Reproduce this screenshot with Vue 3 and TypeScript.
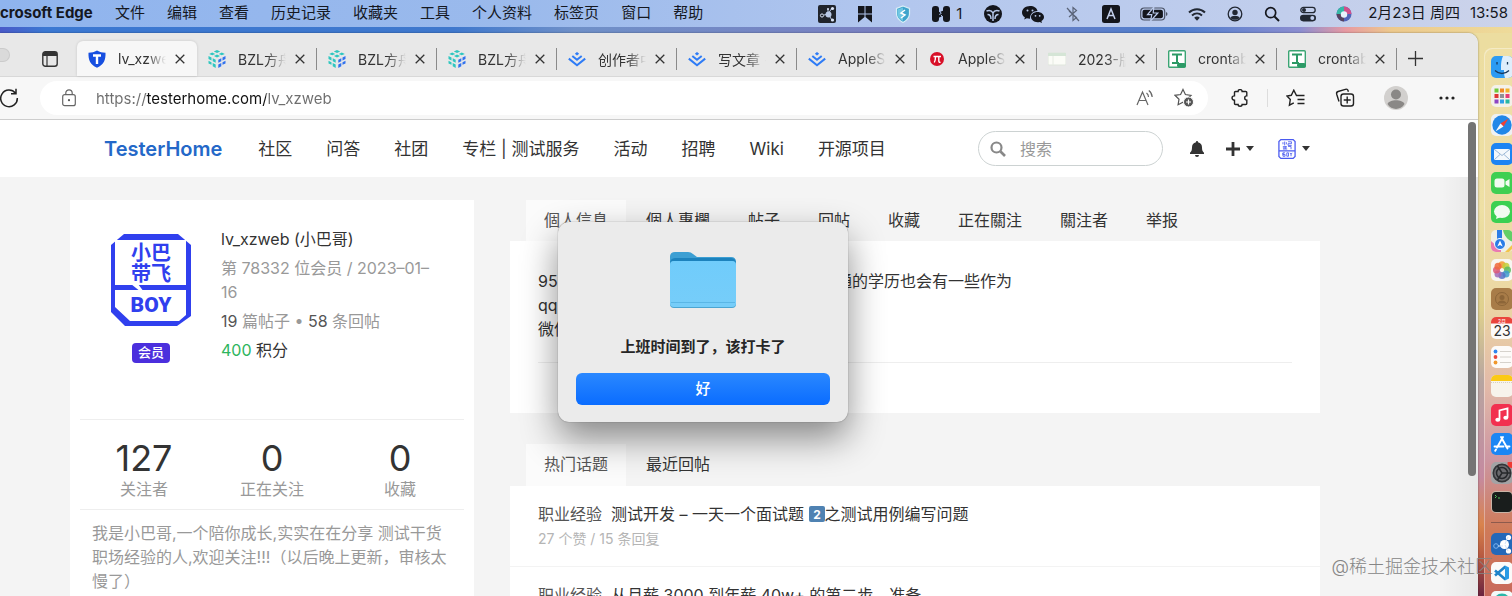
<script setup lang="ts">
import { ref } from 'vue'

interface Glyph { name: string; w: number; h: number; body: string }
interface BrowserTab { title: string; icon: string }
interface DockApp { name: string; body: string }

const menus: string[] = ['文件', '编辑', '查看', '历史记录', '收藏夹', '工具', '个人资料', '标签页', '窗口', '帮助']

const statusLeft: Glyph[] = [
  { name: 'nodes', w: 18, h: 18, body: '<rect width="18" height="18" rx="2" fill="#20242c"/><g stroke="#b9c9e6" stroke-width="1"><path d="M10 9 14 3M10 9l4 6M10 9l-4 1M10 9V4" fill="none"/></g><circle cx="10.5" cy="9.5" r="3" fill="#b9c9e6"/><circle cx="14.5" cy="3.5" r="1.6" fill="#dce6f8"/><circle cx="14.5" cy="15" r="1.6" fill="#dce6f8"/><circle cx="4" cy="10.5" r="1.6" fill="none" stroke="#dce6f8"/><circle cx="10" cy="4" r="1" fill="#dce6f8"/>' },
  { name: 'bookmarks', w: 18, h: 18, body: '<path d="M2 1H8.500V8.500H2ZM9.500 1H16V8.500H9.500ZM2 9.500H8.500V12L2 17.500ZM9.500 9.500H16V17.500L9.500 12Z" fill="#14161c"/>' },
  { name: 'shield', w: 18, h: 18, body: '<path d="M9 1 15.500 3.500V9c0 4-3 6.500-6.500 8.500C5.500 15.500 2.500 13 2.500 9V3.500Z" fill="#3fa4cc" stroke="#d9eef6" stroke-width="1.200"/><path d="M9 2.500V16C5.500 14 3.500 12 3.500 9V4.500Z" fill="#6fc6e2"/><path d="M11 5 7 8l4 2-4 3" fill="none" stroke="#fff" stroke-width="1.500"/>' },
  { name: 'hs', w: 18, h: 18, body: '<rect y="1" width="7" height="16" rx="3" fill="#14161c"/><rect x="11" y="1" width="7" height="16" rx="3" fill="#14161c"/><path d="m5 8 8-3v5l-8 3.500Z" fill="#14161c"/><path d="m7.500 5.500 1.700 3-2 1M10.500 12.500 9.300 10" stroke="#a9bfe8" fill="none"/>' }
]
const statusRight: Glyph[] = [
  { name: 'tri', w: 18, h: 18, body: '<circle cx="9" cy="9" r="9" fill="#14161c"/><path d="M2.500 6c3-1 5.500 0 6.500 2 1-2 3.500-3 6.500-2M9 8v8M3.500 9.500c2.500 0 3.500 1.500 3.500 4.500M14.500 9.500c-2.500 0-3.500 1.500-3.500 4.500" fill="none" stroke="#b6c8ea" stroke-width="1.500"/>' },
  { name: 'wechat', w: 22, h: 18, body: '<path d="M8 1C3.600 1 0 3.800 0 7.400c0 2 1.100 3.700 2.900 4.900L2.200 14.500l2.600-1.300c1 .3 2 .5 3.200.5C8 9 11 6 15.500 6 15 3 12 1 8 1Z" fill="#14161c"/><path d="M15.500 7C11.900 7 9 9.300 9 12.100s2.900 5.100 6.500 5.100c.8 0 1.600-.1 2.300-.3l2.200 1-.6-1.900c1.600-.9 2.600-2.300 2.600-3.900C22 9.300 19.100 7 15.500 7Z" fill="#14161c"/><g fill="#b9c9ea"><circle cx="5.500" cy="5.500" r="1"/><circle cx="10.500" cy="5.500" r="1"/><circle cx="13.500" cy="10.800" r=".9"/><circle cx="17.700" cy="10.800" r=".9"/></g>' },
  { name: 'bluetooth', w: 18, h: 18, body: '<path d="m5 6 7.500 6.500L9 15.500v-13l3.500 3L5 12M3 3l12 13" fill="none" stroke="#5a6377" stroke-width="1.200"/>' },
  { name: 'input', w: 18, h: 18, body: '<rect width="18" height="18" rx="2.500" fill="#14161c"/><path d="M5 14 9 4l4 10M6.400 10.500h5.200" stroke="#c5d2ee" stroke-width="1.500" fill="none"/>' },
  { name: 'battery', w: 28, h: 14, body: '<rect x=".7" y="1" width="24" height="12" rx="3.500" fill="none" stroke="#4a5265" stroke-width="1.200"/><rect x="2.500" y="2.800" width="20.400" height="8.400" rx="2" fill="#14161c"/><path d="M26 5v4c2-.7 2-3.300 0-4" fill="#4a5265"/><path d="M13.800 0 7.500 7.600h4.300L10.600 14l7.200-8h-4.600Z" fill="#14161c" stroke="#bccbec" stroke-width="1.200"/>' },
  { name: 'wifi', w: 18, h: 14, body: '<path d="M1 5.500c4.500-4.400 11.500-4.400 16 0" fill="none" stroke="#222833" stroke-width="2"/><path d="M4 8.500c3-2.700 7-2.700 10 0" fill="none" stroke="#222833" stroke-width="2"/><path d="m6.200 10.700 2.800 3 2.800-3c-1.600-1.500-4-1.500-5.600 0Z" fill="#222833"/>' },
  { name: 'account', w: 18, h: 16, body: '<circle cx="9" cy="8" r="6.800" fill="none" stroke="#222833" stroke-width="1.300"/><circle cx="9" cy="6.400" r="2.700" fill="#222833"/><path d="M4.300 12c1-3 8.400-3 9.400 0-2.500 2.400-6.900 2.400-9.400 0Z" fill="#222833"/>' },
  { name: 'search', w: 16, h: 16, body: '<circle cx="6.700" cy="6.700" r="5" fill="none" stroke="#14161c" stroke-width="1.700"/><path d="m10.500 10.500 4.500 4.500" stroke="#14161c" stroke-width="2"/>' },
  { name: 'controls', w: 16, h: 16, body: '<rect x=".8" y="1.300" width="14.400" height="5.400" rx="2.700" fill="none" stroke="#222833" stroke-width="1.300"/><circle cx="4" cy="4" r="2" fill="#222833"/><rect y="8.700" width="16" height="6.700" rx="3.300" fill="#222833"/><circle cx="12.300" cy="12" r="2" fill="#c0cdec"/>' },
  { name: 'siri', w: 16, h: 16, body: '<circle cx="8" cy="8" r="7.500" fill="#5164b8"/><path d="M8 .5A7.500 7.500 0 0 0 .5 8L8 8Z" fill="#36b8a6"/><path d="M8 .5A7.500 7.500 0 0 1 15.500 8L8 8Z" fill="#d1508c"/><path d="M.5 8c.5 4.500 4 7.500 7.500 7.500L8 8Z" fill="#57425f"/><circle cx="8" cy="8.500" r="3.200" fill="#e9f1fb"/>' }
]

const cube = '<g fill="#2fc7c0"><path d="m9 0 3.200 1.500L9 3 5.800 1.500Z"/><path d="m4.200 2.500 3 1.400L4.200 5.300l-3-1.400ZM13.800 2.500l3 1.400-3 1.400-3-1.400ZM9 4.500l3 1.500-3 1.500L6 6Z"/><path d="m.5 6 3 1.500v3L.5 9ZM.5 10.700l3 1.500v2.600l-3-1.400ZM4.700 8.200l3 1.500v3l-3-1.500ZM4.700 13l3 1.500V18l-3-1.700Z"/></g><g fill="#3272ee"><path d="m17.500 6-3 1.500v3l3-1.500ZM17.500 10.700l-3 1.500v2.600l3-1.400ZM13.300 8.200l-3 1.500v3l3-1.500ZM13.300 13l-3 1.500V18l3-1.700Z"/></g>'
const juejin = '<path d="m9 2 2.200 1.800L9 5.500 6.800 3.800Z" fill="#2f7cf6"/><path d="m4.300 6 4.700 3.700L13.700 6M.8 8.600 9 15.200l8.200-6.600" fill="none" stroke="#2f7cf6" stroke-width="2"/>'
const sheet = '<rect x=".7" y=".7" width="16.600" height="16.600" rx="1" fill="#fff" stroke="#3aa573" stroke-width="1.400"/><path d="M4 4.500h10M9 4.500v8M4 13h7" stroke="#2c9a66" stroke-width="2" fill="none"/><rect x="9" y="13" width="9" height="4.500" rx="2" fill="#2c9a66"/>'
const tabs: BrowserTab[] = [
  { title: 'lv_xzweb', icon: '<path d="M9 .5c3 1.800 5 2 8.500 2.300.3 7-1.500 11.700-8.500 15C2 14.500.2 9.800.5 2.800 4 2.500 6 2.300 9 .5Z" fill="#174fe0"/><path d="M5 5.500h8M9 5.500V14" stroke="#fff" stroke-width="2.400"/>' },
  { title: 'BZL方舟', icon: cube },
  { title: 'BZL方舟', icon: cube },
  { title: 'BZL方舟', icon: cube },
  { title: '创作者中心', icon: juejin },
  { title: '写文章 - 掘金', icon: juejin },
  { title: 'AppleScript', icon: juejin },
  { title: 'AppleScript', icon: '<circle cx="9" cy="9" r="7" fill="#d81028"/><path d="M5.500 6.500h7.500M7.500 6.500c0 3 0 4-1.200 6M10.800 6.500v4.300c0 1.400.7 1.700 1.700 1.300" stroke="#fff" stroke-width="1.400" fill="none"/>' },
  { title: '2023-版本', icon: '<rect x="0" y="3" width="18" height="12" rx="1" fill="#fbfcf7" stroke="#dfe6dc"/><path d="M0 3h18v3H0Z" fill="#d5e5d6"/><path d="M5 6v9" stroke="#e6ebe2"/>' },
  { title: 'crontab', icon: sheet },
  { title: 'crontab', icon: sheet }
]

const siteNav: string[] = ['社区', '问答', '社团', '专栏 | 测试服务', '活动', '招聘', 'Wiki', '开源项目']
const profileTabs: string[] = ['個人信息', '個人專欄', '帖子', '回帖', '收藏', '正在關注', '關注者', '举报']
const topicTabs: string[] = ['热门话题', '最近回帖']
const stats = [
  { value: 127, label: '关注者' },
  { value: 0, label: '正在关注' },
  { value: 0, label: '收藏' }
]

const dockApps: DockApp[] = [
  { name: '访达', body: '<rect width="22" height="22" rx="5" fill="#2c9bf3"/><path d="M12 0h5a5 5 0 0 1 5 5v12a5 5 0 0 1-5 5h-3c-1-3-1-5-1-8h-3c0-6 0-9 2-14Z" fill="#dfeefb"/><path d="M6 6v2.500M16.500 6v2.500M4 14.500c4 4 10 4 14 0" stroke="#17395e" stroke-width="1.300" fill="none"/>' },
  { name: '启动台', body: '<rect width="22" height="22" rx="5" fill="#f4f1ea"/><g><rect x="3.500" y="3.500" width="4" height="4" fill="#6fc93c"/><rect x="9" y="3.500" width="4" height="4" fill="#f08a24"/><rect x="14.500" y="3.500" width="4" height="4" fill="#f1b32b"/><rect x="3.500" y="9" width="4" height="4" fill="#e03636"/><rect x="9" y="9" width="4" height="4" fill="#8f8f96"/><rect x="14.500" y="9" width="4" height="4" fill="#e63b77"/><rect x="3.500" y="14.500" width="4" height="4" fill="#8e44c4"/><rect x="9" y="14.500" width="4" height="4" fill="#2f9fe8"/><rect x="14.500" y="14.500" width="4" height="4" fill="#27b7a4"/></g>' },
  { name: 'Safari', body: '<rect width="22" height="22" rx="5" fill="#eef1f4"/><circle cx="11" cy="11" r="9.700" fill="#2187e8"/><path d="m17.500 4.500-5 8L9.500 9.500Z" fill="#ef4034"/><path d="m4.500 17.500 5-8 3 3Z" fill="#f5f8fb"/>' },
  { name: '邮件', body: '<rect width="22" height="22" rx="5" fill="#1d84f2"/><rect x="3" y="6" width="16" height="11" rx="1.500" fill="#f4f8fc"/><path d="m3.500 6.500 7.500 6 7.500-6M3.500 16.500l5.500-5M18.500 16.500l-5.500-5" stroke="#9bb7d6" fill="none"/>' },
  { name: 'FaceTime', body: '<rect width="22" height="22" rx="5" fill="#3fcf52"/><rect x="3.500" y="6.500" width="10" height="9" rx="2.500" fill="#f2fbf2"/><path d="m14.500 9.500 4-2.500v8l-4-2.500Z" fill="#f2fbf2"/>' },
  { name: '信息', body: '<rect width="22" height="22" rx="5" fill="#3bd052"/><ellipse cx="11" cy="10.500" rx="8" ry="6.500" fill="#f2fbf2"/><path d="m6 14-1 4 5-2Z" fill="#f2fbf2"/>' },
  { name: '地图', body: '<rect width="22" height="22" rx="5" fill="#eff0e6"/><path d="M12 0h5a5 5 0 0 1 5 5v7C17 10 13 6 12 0Z" fill="#63cf68"/><path d="M0 11 10 20v2H5a5 5 0 0 1-5-5Z" fill="#ea7bb0"/><path d="m14 22 8-8v4l-4 4Z" fill="#f3c54b"/><path d="M6 0h5v10H6Z" fill="#2b7de6"/><circle cx="9" cy="14" r="5.500" fill="#2b7de6" stroke="#fff"/><path d="m9 10.500 2.700 6L9 15l-2.700 1.500Z" fill="#fff"/>' },
  { name: '照片', body: '<rect width="22" height="22" rx="5" fill="#f8f6f1"/><g fill-opacity=".85"><circle cx="11" cy="5.700" r="3.500" fill="#f39a2d"/><circle cx="15" cy="7.300" r="3.500" fill="#c4cf3a"/><circle cx="16.500" cy="11" r="3.500" fill="#5cbb61"/><circle cx="15" cy="15" r="3.500" fill="#3e9ccf"/><circle cx="11" cy="16.500" r="3.500" fill="#5472c8"/><circle cx="7" cy="15" r="3.500" fill="#a168b8"/><circle cx="5.500" cy="11" r="3.500" fill="#dd5878"/><circle cx="7" cy="7.300" r="3.500" fill="#ee6a3c"/></g>' },
  { name: '通讯录', body: '<rect width="22" height="22" rx="5" fill="#a87c48"/><circle cx="11" cy="11" r="6.500" fill="none" stroke="#8c6538"/><circle cx="11" cy="9.500" r="2.500" fill="#8c6538"/><path d="M6.500 15.500c1.500-4 7.500-4 9 0Z" fill="#8c6538"/>' },
  { name: '日历', body: '<rect width="22" height="22" rx="5" fill="#fdfbf9"/><path d="M0 6.500V5a5 5 0 0 1 5-5h12a5 5 0 0 1 5 5v1.500Z" fill="#ea453c"/><text x="11" y="5.500" font-size="5" fill="#fff" text-anchor="middle">2月</text><text x="11" y="18.500" font-size="14" fill="#333" text-anchor="middle">23</text>' },
  { name: '提醒事项', body: '<rect width="22" height="22" rx="5" fill="#fdfbf9"/><circle cx="4.500" cy="5.500" r="1.900" fill="#2f86ee"/><circle cx="4.500" cy="11" r="1.900" fill="#e8473c"/><circle cx="4.500" cy="16.500" r="1.900" fill="#f0982d"/><path d="M9 5.500h11M9 11h11M9 16.500h11" stroke="#d6d2cc"/>' },
  { name: '备忘录', body: '<rect width="22" height="22" rx="5" fill="#f7f3ec"/><path d="M0 6V5a5 5 0 0 1 5-5h12a5 5 0 0 1 5 5v1Z" fill="#fbc916"/><path d="M0 7.500h22" stroke="#d6cfc2" stroke-dasharray="1 1"/>' },
  { name: '音乐', body: '<rect width="22" height="22" rx="5" fill="#f2304f"/><path d="M8.500 15.500V6.500l8-2v9" stroke="#fff" stroke-width="1.800" fill="none"/><ellipse cx="6.800" cy="15.700" rx="2.500" ry="2" fill="#fff"/><ellipse cx="14.800" cy="13.700" rx="2.500" ry="2" fill="#fff"/>' },
  { name: 'App Store', body: '<rect width="22" height="22" rx="5" fill="#1b86f4"/><path d="m12 4-6 10.500M10 4l6.500 11.500M3.500 13.500h9M15 13.500h3.500M5 16.500l-.8 1.300" stroke="#fff" stroke-width="1.900" stroke-linecap="round" fill="none"/>' },
  { name: '系统设置', body: '<rect width="22" height="22" rx="5" fill="#a3a3a5"/><circle cx="11" cy="11" r="8.700" fill="#6a6a6e" stroke="#333538" stroke-width="1.700" /><circle cx="11" cy="11" r="5.500" fill="none" stroke="#26282b" stroke-width="1.500"/><path d="M11 11h8.500M11 11 6.500 4M11 11l-4.500 7" stroke="#26282b" stroke-width="1.500"/><circle cx="21" cy="1.500" r="4.500" fill="#ef3a33"/>' },
  { name: '终端', body: '<rect width="22" height="22" rx="5" fill="#c9b4a6"/><rect x="1" y="1" width="20" height="20" rx="4" fill="#191d1c"/><path d="m4 4 1.500 1.500L4 7M7 7h2" stroke="#54c95e" fill="none"/>' }
]
const recentApps: DockApp[] = [
  { name: '节点', body: '<rect width="22" height="22" rx="5" fill="#2468b8"/><circle cx="13.500" cy="11.500" r="4.500" fill="#fff"/><circle cx="17.500" cy="4.500" r="2.600" fill="#fff"/><circle cx="17.500" cy="18" r="2.600" fill="#fff"/><circle cx="5" cy="13" r="2.300" fill="none" stroke="#7cb2ee"/><path d="M7 13h5M14 11l3-7M14 12l3 6" stroke="#cfe2f8"/>' },
  { name: 'VS Code', body: '<rect width="22" height="22" rx="5" fill="#fbfaf9"/><path d="m4 8.500 10.500 9M4 13.500l10.500-9" stroke="#1f83c9" stroke-width="2.600"/><path d="m14 3.500 4 2v11l-4 2Z" fill="#2a9be6"/>' },
  { name: 'Edge', body: '<rect width="22" height="22" rx="5" fill="#f4faf9"/><circle cx="11" cy="11" r="8.500" fill="#29b6a8"/>' }
]

const dialogOpen = ref(true)
const activeProfile = ref(0)
const activeTopic = ref(0)
const address = ref('https://testerhome.com/lv_xzweb')
const query = ref('')
</script>

<template>
  <div class="desktop">
    <header class="menubar">
      <strong class="app-name">crosoft Edge</strong>
      <nav class="menus" aria-label="菜单栏">
        <button v-for="m in menus" :key="m" type="button">{{ m }}</button>
      </nav>
      <div class="status">
        <svg v-for="g in statusLeft" :key="g.name" :width="g.w" :height="g.h" :viewBox="`0 0 ${g.w} ${g.h}`" v-html="g.body" />
        <span class="count">1</span>
        <svg v-for="g in statusRight" :key="g.name" :width="g.w" :height="g.h" :viewBox="`0 0 ${g.w} ${g.h}`" v-html="g.body" />
      </div>
      <time class="clock"><span>2月23日 周四</span><span>13:58</span></time>
    </header>

    <div class="workspace">
      <main class="window">
        <div class="tabstrip">
          <span class="light" />
          <button class="pane" type="button" aria-label="标签页操作">
            <svg width="16" height="16" viewBox="0 0 16 16"><rect x=".8" y=".8" width="14.400" height="14.400" rx="2.500" fill="none" stroke="#333" stroke-width="1.400" /><path d="M1 3a2 2 0 0 1 2-2h10a2 2 0 0 1 2 2v2H1Z" fill="#333" /><path d="M5 5v10" stroke="#333" stroke-width="1.200" /></svg>
          </button>
          <div class="tabs">
            <div v-for="(t, i) in tabs" :key="i" class="tab" :class="{ active: i === 0 }">
              <svg width="18" height="18" viewBox="0 0 18 18" v-html="t.icon" />
              <span class="tab-title">{{ t.title }}</span>
              <button type="button" aria-label="关闭标签页"><svg width="10" height="10" viewBox="0 0 10 10"><path d="m.7.7 8.600 8.600M9.300.7.7 9.300" stroke="#333" stroke-width="1.300" /></svg></button>
            </div>
          </div>
          <button class="new-tab" type="button" aria-label="新标签页"><svg width="15" height="15" viewBox="0 0 15 15"><path d="M7.500 0v15M0 7.500h15" stroke="#333" stroke-width="1.300" /></svg></button>
        </div>

        <div class="toolbar">
          <button class="reload" type="button" aria-label="刷新"><svg width="20" height="20" viewBox="0 0 20 20"><path d="M16.500 5.200A8.300 8.300 0 1 0 18.300 10M17 .8v5h-5" fill="none" stroke="#222" stroke-width="1.500" /></svg></button>
          <div class="address">
            <svg width="14" height="18" viewBox="0 0 14 18"><rect x=".7" y="5.700" width="12.600" height="11" rx="2" fill="none" stroke="#666" stroke-width="1.200" /><path d="M3.800 5.500V4a3.200 3.200 0 0 1 6.400 0v1.500" fill="none" stroke="#666" stroke-width="1.200" /><circle cx="7" cy="11.200" r="1.100" fill="#555" /></svg>
            <input v-model="address" type="text" aria-label="地址栏">
            <button type="button" aria-label="朗读"><svg width="18" height="18" viewBox="0 0 18 18"><path d="M1 16 6.500 3 12 16M3 11.500h7M10.500 4c1.300 1 2 2.300 2 4M12.800 1.500c2.200 1.500 3.200 3.600 3.400 6.500" fill="none" stroke="#666" stroke-width="1.200" /></svg></button>
            <button type="button" aria-label="收藏此页"><svg width="20" height="20" viewBox="0 0 20 20"><path d="m9 1.500 2.400 5 5.600.8-4 3.900.9 5.500L9 14.100l-4.900 2.600.9-5.500-4-3.900 5.600-.8Z" fill="none" stroke="#555" stroke-width="1.200" /><circle cx="14.500" cy="14" r="5" fill="#555" stroke="#fff" /><path d="M14.500 11.500v5M12 14h5" stroke="#fff" stroke-width="1.200" /></svg></button>
          </div>
          <div class="tools">
            <button type="button" aria-label="扩展"><svg width="18" height="18" viewBox="0 0 18 18"><path d="M4.500 2.500h2.600c0-2.600 4-2.600 4 0h3.700c.6 0 1 .4 1 1v3.400c-2.800 0-2.800 4.200 0 4.200v3.400c0 .6-.4 1-1 1h-3.700c0 2.400-4 2.400-4 0H4.500c-.6 0-1-.4-1-1v-3.400C.2 11.100.2 6.900 3.500 6.900V3.500c0-.6.4-1 1-1Z" fill="none" stroke="#222" stroke-width="1.400" /></svg></button>
            <i class="bar" />
            <button type="button" aria-label="收藏夹"><svg width="20" height="18" viewBox="0 0 20 18"><path d="M18.500 6.500H10.500L7.800 1.200 5.300 6.300 1 7l3.300 3.500-.9 5.700 4.400-2.400M11.500 10.500h7M11.500 14.500h7" fill="none" stroke="#222" stroke-width="1.400" /></svg></button>
            <button type="button" aria-label="集锦"><svg width="20" height="20" viewBox="0 0 20 20"><rect x="6" y="6" width="12.500" height="12" rx="2.500" fill="none" stroke="#222" stroke-width="1.400" /><path d="M12.200 8.500v7M8.700 12h7M4 13.500l-2.300-7.300c-.4-1.400.2-2.300 1.400-2.700l7.300-2.200c1.300-.4 2.300.1 2.700 1.400l.3 1" fill="none" stroke="#222" stroke-width="1.400" /></svg></button>
            <button type="button" aria-label="个人资料"><svg width="24" height="24" viewBox="0 0 24 24"><circle cx="12" cy="12" r="12" fill="#d2d0ce" /><circle cx="12" cy="8.500" r="5" fill="#8a8886" /><path d="M3.500 18c2-5 15-5 17 0-4 6.500-13 6.500-17 0Z" fill="#8a8886" /></svg></button>
            <button type="button" aria-label="更多"><svg width="16" height="4" viewBox="0 0 16 4"><circle cx="2" cy="2" r="1.600" fill="#222" /><circle cx="8" cy="2" r="1.600" fill="#222" /><circle cx="14" cy="2" r="1.600" fill="#222" /></svg></button>
          </div>
        </div>

        <div class="page">
          <header class="site-head">
            <a class="brand" href="#">TesterHome</a>
            <nav class="site-nav"><a v-for="n in siteNav" :key="n" href="#">{{ n }}</a></nav>
            <label class="search">
              <svg width="16" height="16" viewBox="0 0 16 16"><circle cx="6.500" cy="6.500" r="5" fill="none" stroke="#888" stroke-width="2.200" /><path d="m10.500 10.500 4.500 4.500" stroke="#888" stroke-width="2.600" /></svg>
              <input v-model="query" type="search" placeholder="搜索" aria-label="搜索">
            </label>
            <div class="user-tools">
              <button type="button" aria-label="通知"><svg width="14" height="16" viewBox="0 0 14 16"><path d="M7 0c.7 0 1 .5 1 1.200 2.600.5 4 2.500 4 5 0 3 .6 4.300 2 5.600v1.200H0v-1.200c1.400-1.300 2-2.600 2-5.600 0-2.500 1.400-4.500 4-5C6 .5 6.300 0 7 0ZM5 14h4a2 2 0 0 1-4 0Z" fill="#333" /></svg></button>
              <button type="button" aria-label="新建"><svg width="14" height="14" viewBox="0 0 14 14"><path d="M7 0v14M0 7h14" stroke="#333" stroke-width="2.800" /></svg><i class="caret" /></button>
              <button type="button" aria-label="我的">
                <svg class="mini" width="18" height="20" viewBox="0 0 82 94"><path d="M12 3h58l9 9v70L70 91H12L3 82V12ZM3 56h76" fill="none" stroke="#4a5af0" stroke-width="6" /><path d="M22 15v10M30 12v18M38 15v10M46 13h16v9H46v8h17M21 37h20M27 33v14M35 33v14M46 35h14v13M22 47h20M22 65v16h10v-8H22v-8h10M40 65h8v16h-8ZM55 65l5 7 5-7M60 72v9" fill="none" stroke="#4a5af0" stroke-width="4" /></svg><i class="caret" />
              </button>
            </div>
          </header>

          <div class="content">
            <aside class="profile">
              <div class="identity">
                <div class="portrait">
                  <svg width="82" height="94" viewBox="0 0 82 94">
                    <path d="M14 1H68L81 12V83L67 93H15L1 79V12Z" fill="#3040ee" />
                    <path d="M5 7H76V52H5ZM5 57H76V82L69 88H20L5 74Z" fill="#fff" />
                    <path d="M21 51H28L34 59H31Z" fill="#fff" />
                    <g class="logo-text"><text x="41" y="27">小巴</text><text x="41" y="48">带飞</text><text class="boy" x="41" y="79">BOY</text></g>
                  </svg>
                  <span class="badge">会员</span>
                </div>
                <div class="facts">
                  <p class="dark">lv_xzweb (小巴哥)</p>
                  <p>第 78332 位会员 / 2023–01–<br>16</p>
                  <p><b>19</b> 篇帖子 • <b>58</b> 条回帖</p>
                  <p class="dark"><span class="green">400</span> 积分</p>
                </div>
              </div>
              <div class="stats">
                <a v-for="s in stats" :key="s.label" href="#"><strong>{{ s.value }}</strong><span>{{ s.label }}</span></a>
              </div>
              <p class="bio">我是小巴哥,一个陪你成长,实实在在分享 测试干货<br>职场经验的人,欢迎关注!!!（以后晚上更新，审核太<br>慢了）</p>
            </aside>

            <section class="feed">
              <nav class="subtabs">
                <button v-for="(t, i) in profileTabs" :key="t" type="button" :class="{ on: i === activeProfile }" @click="activeProfile = i">{{ t }}</button>
              </nav>
              <div class="card intro">
                <p class="split"><span>95</span><span>通的学历也会有一些作为</span></p>
                <p>qq</p>
                <p>微信</p>
                <hr>
              </div>
              <nav class="subtabs second">
                <button v-for="(t, i) in topicTabs" :key="t" type="button" :class="{ on: i === activeTopic }" @click="activeTopic = i">{{ t }}</button>
              </nav>
              <div class="card topics">
                <article>
                  <h2><a class="node" href="#">职业经验</a><a href="#">测试开发 – 一天一个面试题 <svg width="16" height="16" viewBox="0 0 16 16"><rect width="16" height="16" rx="2" fill="#4f82b2" /><text x="8" y="12.500" text-anchor="middle" font-size="12" font-weight="700" fill="#fff">2</text></svg>之测试用例编写问题</a></h2>
                  <p>27 个赞 / 15 条回复</p>
                </article>
                <article>
                  <h2><a class="node" href="#">职业经验</a><a href="#">从月薪 3000 到年薪 40w+ 的第二步，准备</a></h2>
                </article>
              </div>
            </section>
          </div>
          <span class="scroll-thumb" />
        </div>
      </main>

      <nav class="dock" aria-label="程序坞">
        <button v-for="a in dockApps" :key="a.name" type="button" :aria-label="a.name"><svg width="22" height="22" viewBox="0 0 22 22" v-html="a.body" /></button>
        <hr>
        <button v-for="a in recentApps" :key="a.name" type="button" :aria-label="a.name"><svg width="22" height="22" viewBox="0 0 22 22" v-html="a.body" /></button>
      </nav>
    </div>

    <div v-if="dialogOpen" class="dialog" role="alertdialog" aria-labelledby="alert-title">
      <svg width="70" height="60" viewBox="0 0 70 60">
        <defs><linearGradient id="folder" x1="0" y1="0" x2="0" y2="1"><stop offset="0" stop-color="#70ccfb" /><stop offset="1" stop-color="#76cdf9" /></linearGradient></defs>
        <path d="M2 7Q2 2 7 2H20Q23 2 25 4L29 7H63Q68 7 68 12V30H2Z" fill="#3c9fd3" />
        <path d="M2 14Q2 8 7 8H63Q68 8 68 14V30H2Z" fill="#1c82bd" />
        <rect x="2" y="11" width="66" height="47" rx="4" fill="#4ba5d2" />
        <rect x="2" y="11" width="66" height="46" rx="4" fill="url(#folder)" />
        <path d="M3 52.500H67" stroke="#5ab6e6" />
      </svg>
      <p id="alert-title">上班时间到了，该打卡了</p>
      <button type="button" @click="dialogOpen = false">好</button>
    </div>
    <span class="watermark">@稀土掘金技术社区</span>
  </div>
</template>

<style>
html, body { margin: 0; height: 100%; overflow: hidden; }
#app { height: 100%; }
</style>

<style scoped>
* { box-sizing: border-box; }
.desktop {
  position: relative; height: 100vh; min-height: 100%; overflow: hidden; display: flex; flex-direction: column;
  font-family: Inter, "Noto Sans CJK SC", sans-serif; color: #333;
  background: linear-gradient(180deg, #ecdda0 0 8%, #eee0a4 35%, #dfd08d 52%, #b7a5a0 64%, #c58aa0 80%, #d9834c 88%, #b35540 94%, #6a2440 100%);
}
button { border: 0; padding: 0; margin: 0; background: none; font: inherit; color: inherit; display: inline-flex; align-items: center; justify-content: center; flex-shrink: 0; }
a { color: inherit; text-decoration: none; }
p, h2 { margin: 0; font-weight: 400; }
svg { flex-shrink: 0; display: block; }
.menubar {
  flex: 0 0 27px; display: flex; align-items: center; color: #15181f; font-size: 15px; white-space: nowrap;
  background: linear-gradient(90deg, #8fb4ee, #9bbaec 35%, #b3c7ee 60%, #c1ceec 85%, #ccd3ea);
}
.app-name { width: 115px; font-size: 15px; line-height: 24px; font-weight: 700; padding-bottom: 2px; }
.menus { display: flex; gap: 22px; flex: 1; padding-bottom: 4px; }
.status { display: flex; align-items: center; gap: 20px; margin-right: 16px; }
.status .count { margin-left: -14px; width: 8px; }
.clock { display: flex; align-items: baseline; gap: 10px; margin-right: 4px; padding-bottom: 4px; }
.workspace {
  flex: 1; min-height: 0; display: grid; grid-template-columns: minmax(0, 1fr) 28px; gap: 6px; padding-top: 6px;
  background: linear-gradient(90deg, #4a5ac8, #3b78d2 3%, #3f78cd 30%, #6f90c8 38%, #7a7fc0 60%, #4f7fce 78%, #8c8ed0 86%, #e79aa2 89%, #edc98d 92%, #eedb9a) top / 100% 6px no-repeat;
}
.window { min-width: 0; display: flex; flex-direction: column; background: #f7f7f7; border-radius: 0 10px 0 0; overflow: hidden; box-shadow: 0 0 2px rgba(0, 0, 0, .45); }
.tabstrip { flex: 0 0 44px; display: flex; align-items: center; background: #e8e8e8; border-bottom: 1px solid #d8d8d8; padding-top: 8px; }
.light { flex: 0 0 10px; height: 14px; background: #dadada; border: 1px solid #cbcbcb; border-left: 0; border-radius: 0 7px 7px 0; margin-bottom: 8px; }
.pane { margin: 0 18px 0 32px; }
.tabs { display: flex; flex: 0 1 1321px; min-width: 0; height: 100%; padding-left: 1px; }
.tab { flex: 0 1 120px; min-width: 0; display: flex; align-items: center; padding: 0 11px; position: relative; }
.tab::after { content: ""; position: absolute; right: 0; top: 7px; height: 22px; width: 1px; background: #8a8a8a; }
.tab.active { background: #f7f7f7; border-radius: 6px 6px 0 0; box-shadow: 0 0 3px rgba(0, 0, 0, .15); }
.tab.active::after { display: none; }
.tab-title { margin: 0 9px 0 12px; width: 48px; overflow: hidden; white-space: nowrap; font-size: 14px; -webkit-mask-image: linear-gradient(90deg, #000 60%, transparent); mask-image: linear-gradient(90deg, #000 60%, transparent); }
.new-tab { margin-left: 11px; }
.toolbar { flex: 0 0 43px; display: flex; align-items: center; border-bottom: 1px solid #cdcdcd; background: #f7f7f7; }
.reload { margin-left: -1px; }
.address { flex: 1; min-width: 0; height: 34px; margin: 0 23px 0 21px; padding: 0 14px 0 22px; display: flex; align-items: center; gap: 20px; background: #fff; border-radius: 17px; }
.address input {
  flex: 1; min-width: 0; border: 0; outline: 0; padding: 0; font: 400 15px Inter, sans-serif; color: transparent;
  background: linear-gradient(90deg, #6e6e6e 50px, #111 50px 170px, #6e6e6e 170px); -webkit-background-clip: text; background-clip: text;
}
.tools { display: flex; align-items: center; gap: 29px; padding-right: 23px; }
.tools button:last-child { margin-left: 2px; }
.bar { width: 1px; height: 18px; background: #ddd; margin: 0 -11px; }
.page { flex: 1; min-height: 0; overflow: hidden; position: relative; background: linear-gradient(90deg, transparent calc(100% - 40px), rgba(0, 0, 0, .05)), #f4f4f4; }
.site-head { height: 57px; padding: 0 168px 0 104px; display: flex; align-items: center; background: #fff; font-size: 17px; white-space: nowrap; }
.brand { color: #2468c8; font-size: 20px; font-weight: 600; }
.site-nav { display: flex; align-items: baseline; gap: 34px; margin-left: 36px; flex: 1; padding-bottom: 3px; }
.search { width: 185px; height: 35px; border: 1px solid #ccd2d2; border-radius: 18px; display: flex; align-items: center; padding-left: 11px; gap: 14px; }
.search input { width: 120px; border: 0; outline: 0; padding: 0; background: none; font: 400 16px Inter, "Noto Sans CJK SC", sans-serif; }
.search input::placeholder { color: #999; }
.user-tools { display: flex; align-items: center; gap: 22px; margin-left: 27px; }
.user-tools button { gap: 6px; }
.user-tools button:last-child { margin-left: 2px; }
.caret { border: 4px solid transparent; border-top: 5px solid #333; border-bottom: 0; }
.content { display: grid; grid-template-columns: 404px minmax(0, 1fr); gap: 36px; padding: 23px 158px 0 70px; }
.profile { background: #fff; padding: 0 10px 40px; font-size: 16px; line-height: 24px; color: #999; }
.identity { display: flex; height: 219px; padding: 27px 0 0 30px; }
.portrait { width: 82px; display: flex; flex-direction: column; align-items: center; padding-top: 6px; }
.logo-text { font: 700 20px "Noto Sans CJK SC", sans-serif; fill: #3040ee; text-anchor: middle; }
.boy { font: 900 21px Roboto, sans-serif; }
.badge { margin-top: 16px; width: 38px; height: 20px; line-height: 19px; border-radius: 4px; background: #4b2fdd; color: #fff; font-size: 13px; font-weight: 500; text-align: center; }
.facts { margin-left: 29px; display: grid; gap: 5px; align-content: start; white-space: nowrap; }
.facts b { font-weight: 400; color: #555; }
.dark { color: #333; }
.green { color: #2db55d; }
.stats { display: grid; grid-template-columns: repeat(3, 1fr); border: 1px solid #eee; border-width: 1px 0; height: 91px; padding-top: 16px; text-align: center; }
.stats strong { display: block; font-weight: 400; font-size: 36px; line-height: 44px; color: #333; }
.stats span { display: block; line-height: 18px; }
.bio { padding: 11px 0 0 12px; white-space: nowrap; }
.feed { min-width: 0; font-size: 16px; }
.subtabs { display: flex; gap: 2px; padding-left: 16px; height: 41px; }
.subtabs button { padding: 0 18px 4px; }
.subtabs .on { background: #fbfbfb; color: #555; }
.card { background: #fff; line-height: 24px; }
.intro { height: 172px; padding: 28px 28px 0; }
.split { display: grid; grid-template-columns: 298px auto; }
.intro hr { border: 0; border-top: 1px solid #eee; margin: 21px 0 0; }
.subtabs.second { margin-top: 31px; height: 42px; }
.topics { min-height: 180px; }
article { height: 81px; padding: 16px 28px 0; border-bottom: 1px solid #f3f3f3; }
article h2 { font-size: 16px; line-height: 24px; }
article h2 svg { display: inline-block; vertical-align: -2px; }
article p { font-size: 14px; line-height: 26px; color: #b5b5b5; }
.node { color: #555; margin-right: 9px; }
.scroll-thumb { position: absolute; right: 2px; top: 2px; width: 8px; height: 354px; border-radius: 4px; background: #747474; }
.dock { margin-top: 15px; padding: 8px 0 0 7px; display: flex; flex-direction: column; gap: 7px; overflow: hidden; border-radius: 8px 0 0 0; background: linear-gradient(180deg, #efe0a6, #ecd9a4 45%, #e2b9a8 62%, #cc96a2 75%, #cf7a58 88%, #c96a5c); box-shadow: inset 1px 1px rgba(255, 255, 255, .35); }
.dock button { width: 22px; height: 22px; }
.dock hr { width: 22px; border: 0; border-top: 1px solid #8d5a4c; margin: 2px 0 3px; flex-shrink: 0; }
.dialog {
  position: absolute; left: 558px; top: 222px; width: 290px; padding: 28px 18px 17px; display: flex; flex-direction: column; align-items: center;
  background: #ebebeb; border-radius: 11px; box-shadow: 0 0 1px rgba(0, 0, 0, .6), 0 16px 36px rgba(0, 0, 0, .45);
}
.dialog p { margin: 24px 0 13px; font-size: 15px; line-height: 26px; font-weight: 700; color: #262626; }
.dialog button { width: 100%; height: 32px; padding-bottom: 4px; border-radius: 6px; color: #fff; font-size: 15px; font-weight: 500; background: linear-gradient(180deg, #2a88ff, #0a6cff); }
.watermark { position: absolute; right: 19px; bottom: 16px; font-size: 18px; line-height: 26px; font-weight: 300; color: #858585; }
</style>
